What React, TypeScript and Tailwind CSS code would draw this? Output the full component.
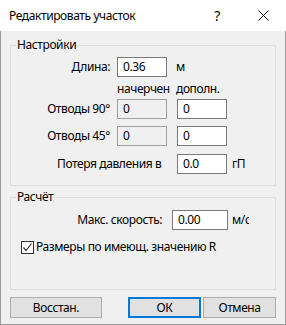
import React from "react";

const font = { fontFamily: '"Noto Sans", "Liberation Sans", sans-serif' };

function Input({ value, w, readOnly }: { value: string; w: string; readOnly?: boolean }) {
  return (
    <div
      className={`${w} h-[20px] border ${readOnly ? "bg-[#f0f0f0] border-[#a0a0a0]" : "bg-white border-[#7a7a7a]"} flex items-center pl-[5px] text-[12px] leading-[16px] text-black`}
    >
      {value}
    </div>
  );
}

export default function App() {
  return (
    <div className="w-[286px] h-[325px] flex flex-col bg-[#f0f0f0] text-[12px] leading-[16px] tracking-[-0.4px] text-black" style={font}>
      <div className="h-[31px] bg-white flex items-center shrink-0">
        <div className="pl-[9px] flex-1 text-[12px]">Редактировать участок</div>
        <div className="w-[46px] h-full flex items-center justify-center text-[14px]">?</div>
        <div className="w-[46px] h-full flex items-center justify-center">
          <svg width="11" height="11" viewBox="0 0 11 11">
            <path d="M0.5 0.5 L10.5 10.5 M10.5 0.5 L0.5 10.5" stroke="#000" strokeWidth="1" fill="none" />
          </svg>
        </div>
      </div>
      <div className="flex-1 border-x border-b border-[#9a9a9a] pl-[9px] pr-[9px] flex flex-col">
        <div className="relative mt-[14px] h-[141px] border border-[#dcdcdc] flex flex-col pt-[11px]">
          <div className="absolute left-[5px] top-[-9px] h-[16px] px-[1px] bg-[#f0f0f0]">Настройки</div>
          <div className="flex items-center h-[20px]">
            <div className="w-[99px] text-right">Длина:</div>
            <div className="ml-[7px]"><Input value="0.36" w="w-[50px]" /></div>
            <div className="ml-[9px]">м</div>
          </div>
          <div className="flex items-center h-[16px] mt-[4px] pl-[106px]">
            <div className="w-[59px] whitespace-nowrap">начерчен</div>
            <div>дополн.</div>
          </div>
          <div className="flex items-center h-[20px] mt-[2px]">
            <div className="w-[99px] text-right">Отводы 90°</div>
            <div className="ml-[7px]"><Input value="0" w="w-[50px]" readOnly /></div>
            <div className="ml-[10px]"><Input value="0" w="w-[50px]" /></div>
          </div>
          <div className="flex items-center h-[20px] mt-[7px]">
            <div className="w-[99px] text-right">Отводы 45°</div>
            <div className="ml-[7px]"><Input value="0" w="w-[50px]" readOnly /></div>
            <div className="ml-[10px]"><Input value="0" w="w-[50px]" /></div>
          </div>
          <div className="flex items-center h-[20px] mt-[8px]">
            <div className="w-[166px] pl-[46px] whitespace-nowrap">Потеря давления в</div>
            <Input value="0.0" w="w-[50px]" />
            <div className="ml-[5px]">гП</div>
          </div>
        </div>
        <div className="relative mt-[11px] h-[93px] border border-[#dcdcdc] flex flex-col pt-[12px]">
          <div className="absolute left-[5px] top-[-9px] h-[16px] px-[1px] bg-[#f0f0f0]">Расчёт</div>
          <div className="flex items-center h-[20px]">
            <div className="w-[151px] text-right whitespace-nowrap">Макс. скорость:</div>
            <div className="ml-[10px]"><Input value="0.00" w="w-[56px]" /></div>
            <div className="ml-[4px] w-[17px] overflow-hidden whitespace-nowrap">м/с</div>
          </div>
          <div className="flex items-center h-[16px] mt-[9px] pl-[10px]">
            <div className="w-[13px] h-[13px] border border-[#333] bg-white flex items-center justify-center">
              <svg width="11" height="11" viewBox="0 0 11 11">
                <path d="M1.5 5.5 L4 8.5 L9.5 1.5" stroke="#333" strokeWidth="1.2" fill="none" />
              </svg>
            </div>
            <div className="ml-[2px] whitespace-nowrap">Размеры по имеющ. значению R</div>
          </div>
        </div>
        <div className="flex h-[21px] mt-[7px]">
          <div className="w-[92px] h-full bg-[#e1e1e1] border border-[#adadad] flex items-center justify-center">Восстан.</div>
          <div className="ml-[26px] w-[73px] h-full bg-[#e1e1e1] border-2 border-[#0078d7] flex items-center justify-center">ОК</div>
          <div className="ml-[2px] w-[73px] h-full bg-[#e1e1e1] border border-[#adadad] flex items-center justify-center">Отмена</div>
        </div>
      </div>
    </div>
  );
}
